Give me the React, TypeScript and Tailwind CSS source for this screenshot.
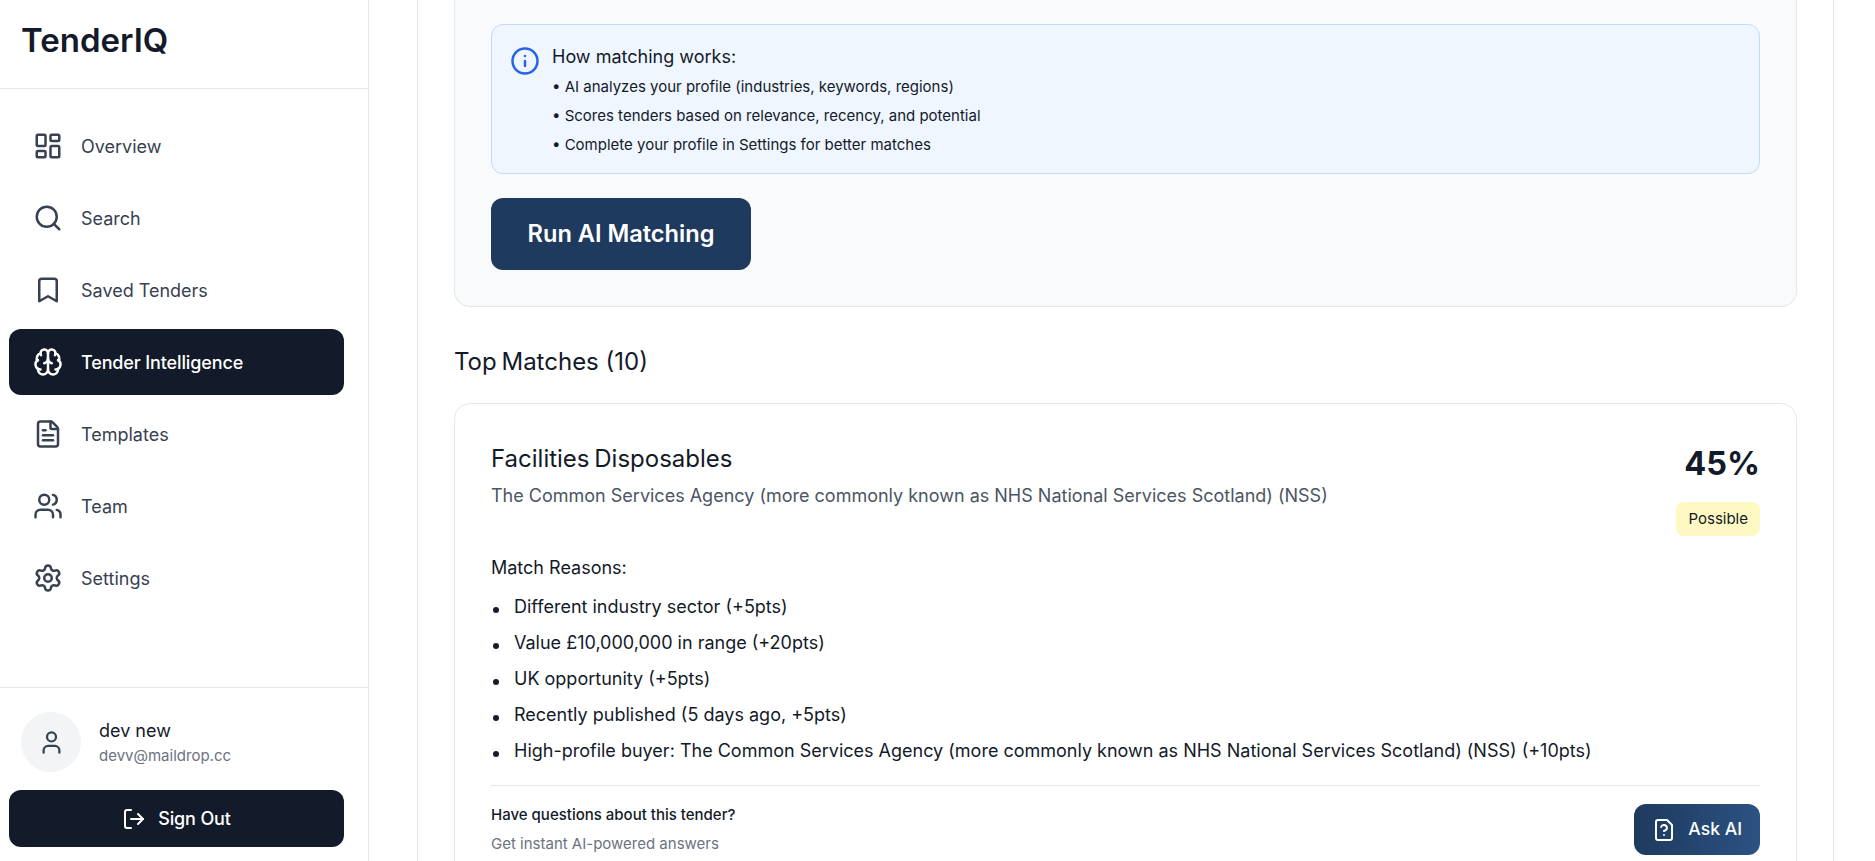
import React from "react";
import { LayoutDashboard, Search, Bookmark, Brain, FileText, Users, Settings, User, LogOut, Info } from "lucide-react";

const nav = [
  { label: "Overview", icon: LayoutDashboard },
  { label: "Search", icon: Search },
  { label: "Saved Tenders", icon: Bookmark },
  { label: "Tender Intelligence", icon: Brain, active: true },
  { label: "Templates", icon: FileText },
  { label: "Team", icon: Users },
  { label: "Settings", icon: Settings },
];

const reasons = [
  "Different industry sector (+5pts)",
  "Value £10,000,000 in range (+20pts)",
  "UK opportunity (+5pts)",
  "Recently published (5 days ago, +5pts)",
  "High-profile buyer: The Common Services Agency (more commonly known as NHS National Services Scotland) (NSS) (+10pts)",
];

function FileQuestion() {
  return (
    <svg width="24" height="24" viewBox="0 0 24 24" fill="none" stroke="currentColor" strokeWidth="2" strokeLinecap="round" strokeLinejoin="round" className="shrink-0">
      <path d="M12 17h.01" />
      <path d="M15 2H6a2 2 0 0 0-2 2v16a2 2 0 0 0 2 2h12a2 2 0 0 0 2-2V7z" />
      <path d="M9.1 9a3 3 0 0 1 5.82 1c0 2-3 3-3 3" />
    </svg>
  );
}

export default function App() {
  return (
    <div className="flex h-[861px] w-[1875px] overflow-hidden bg-white text-[#131a29] font-['Inter',sans-serif]">
      <aside className="flex h-full w-[369px] shrink-0 flex-col border-r border-[#e5e7eb]">
        <div className="flex h-[89px] items-center border-b border-[#e5e7eb] px-[21px] pb-[7px]">
          <h1 className="text-[33px] font-semibold leading-none">TenderIQ</h1>
        </div>
        <nav className="flex flex-1 flex-col gap-[6px] pl-[9px] pr-[24px] pt-[24px]">
          {nav.map((n) => (
            <div
              key={n.label}
              className={`flex h-[66px] items-center gap-[18px] rounded-[12px] px-[24px] text-[18px] ${n.active ? "bg-[#131a29] font-medium tracking-[-0.13px] text-white" : "text-[#374151]"}`}
            >
              <n.icon size={30} strokeWidth={2} className="shrink-0" />
              <span>{n.label}</span>
            </div>
          ))}
        </nav>
        <div className="border-t border-[#e5e7eb] pb-[14px] pl-[9px] pr-[24px] pt-[24px]">
          <div className="flex items-center gap-[18px] px-[12px]">
            <div className="flex h-[60px] w-[60px] items-center justify-center rounded-full bg-[#f3f4f6]">
              <User size={27} className="text-[#374151]" />
            </div>
            <div>
              <div className="text-[18px] leading-[27px]">dev new</div>
              <div className="text-[15px] leading-[24px] text-[#6b7280]">devv@maildrop.cc</div>
            </div>
          </div>
          <button className="mt-[18px] flex h-[57px] w-full items-center justify-center gap-[12px] rounded-[12px] bg-[#131a29] text-[18px] font-medium tracking-[-0.13px] text-white">
            <LogOut size={24} />
            Sign Out
          </button>
        </div>
      </aside>
      <main className="flex-1 pl-[48px] pr-[41px]">
        <div className="h-full border-x border-[#e5e7eb] px-[36px]">
          <section className="rounded-b-[16px] border-x border-b border-[#e5e7eb] bg-[#f9fafb] px-[36px] pb-[36px] pt-[24px]">
            <div className="flex gap-[12px] rounded-[12px] border border-[#bfdbfe] bg-[#eff6ff] pb-[16px] pl-[18px] pr-[17px] pt-[18px]">
              <Info size={30} className="mt-[3px] shrink-0 text-[#2563eb]" />
              <div>
                <div className="text-[18px] leading-[27px]">How matching works:</div>
                <ul className="text-[15px] leading-[24px]">
                  <li className="mt-[5px]">• AI analyzes your profile (industries, keywords, regions)</li>
                  <li className="mt-[5px]">• Scores tenders based on relevance, recency, and potential</li>
                  <li className="mt-[5px]">• Complete your profile in Settings for better matches</li>
                </ul>
              </div>
            </div>
            <button className="mt-[24px] h-[72px] w-[260px] rounded-[12px] bg-[#1e3a5f] text-[23.6px] font-semibold text-white">
              Run AI Matching
            </button>
          </section>
          <h2 className="mt-[37px] text-[24px] font-normal leading-[36px]">
            <span className="[word-spacing:-2px]">Top Matches</span> (10)
          </h2>
          <section className="mt-[23px] rounded-[16px] border border-[#e5e7eb] bg-white px-[36px] pb-[60px] pt-[37px]">
            <div className="flex items-start justify-between">
              <div>
                <h3 className="text-[24px] font-normal leading-[36px] [word-spacing:-2px]">Facilities Disposables</h3>
                <p className="mt-[5px] text-[18px] leading-[27px] text-[#4b5563]">
                  The Common Services Agency (more commonly known as NHS National Services Scotland) (NSS)
                </p>
              </div>
              <div className="flex flex-col items-end">
                <div className="text-[32.5px] font-bold leading-[46px]">45%</div>
                <span className="mt-[15px] rounded-[8px] bg-[#fef9c3] px-[12px] py-[6px] text-[15px] leading-[22px]">Possible</span>
              </div>
            </div>
            <div className="mt-[18px] text-[18px] leading-[27px]">Match Reasons:</div>
            <ul className="mt-[12px] flex flex-col gap-[9px]">
              {reasons.map((r) => (
                <li key={r} className="flex items-center gap-[15px] pl-[2px] text-[18px] leading-[27px]">
                  <span className="mt-[6px] h-[6px] w-[6px] shrink-0 rounded-full bg-[#131a29]"></span>
                  {r}
                </li>
              ))}
            </ul>
            <div className="mt-[21px] flex items-start justify-between border-t border-[#e5e7eb] pt-[18px]">
              <div>
                <div className="text-[15px] font-medium leading-[22px]">Have questions about this tender?</div>
                <div className="mt-[6px] text-[15px] leading-[24px] text-[#6b7280]">Get instant AI-powered answers</div>
              </div>
              <button className="flex h-[51px] items-center gap-[12px] rounded-[12px] bg-gradient-to-r from-[#1e3a5f] to-[#2c5282] px-[18px] text-[17.6px] font-medium text-white">
                <FileQuestion />
                Ask AI
              </button>
            </div>
          </section>
        </div>
      </main>
    </div>
  );
}
